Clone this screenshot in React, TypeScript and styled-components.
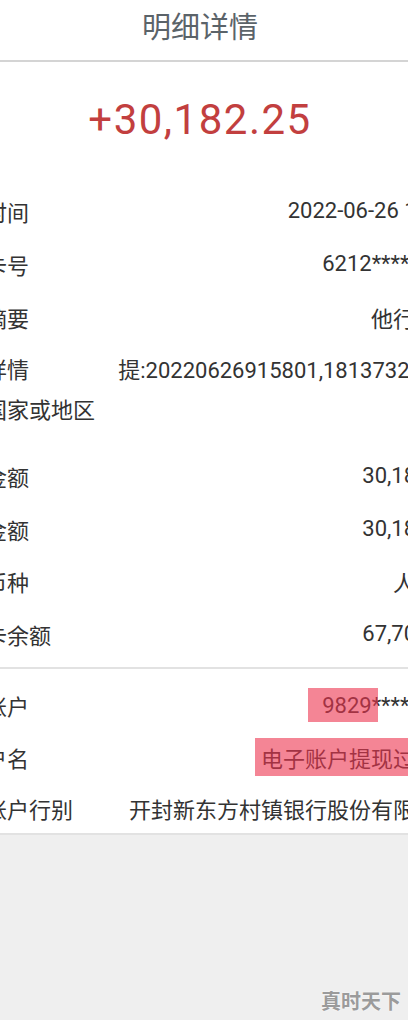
import styled, { createGlobalStyle } from 'styled-components';

const GlobalStyle = createGlobalStyle`
  html, body {
    margin: 0;
    padding: 0;
    background: #efefef;
  }
  body {
    font-family: Roboto, "Noto Sans CJK SC", sans-serif;
    color: #333333;
  }
`;

interface IRow {
  label: string;
  value: string;
  h?: number;
  pb?: number;
  mark?: { left: number; width?: number; height: number };
}

const mainRows: IRow[] = [
  { label: '交易时间', value: '2022-06-26\u00a015:32' },
  { label: '对方卡号', value: '6212****3518' },
  { label: '交易摘要', value: '他行转入' },
  { label: '交易详情', value: '提:20220626915801,18137320564', h: 50 },
  { label: '交易国家或地区', value: '中国', h: 56, pb: 26 },
  { label: '交易金额', value: '30,182.25' },
  { label: '入账金额', value: '30,182.25' },
  { label: '交易币种', value: '人民币', h: 52 },
  { label: '账户卡余额', value: '67,705.63' },
];

const payeeRows: IRow[] = [
  { label: '对方账户', value: '9829****3366', h: 52, mark: { left: -14, width: 70, height: 34 } },
  { label: '对方户名', value: '电子账户提现过渡户', h: 52, mark: { left: -6, height: 38 } },
  { label: '对方账户行别', value: '开封新东方村镇银行股份有限公司', h: 50 },
];

const DetailRow = ({ label, value, h, pb, mark }: IRow) => (
  <Row $h={h ?? 53} $pb={pb ?? 0}>
    <Label>{label}</Label>
    <Value>
      {mark && <Mark style={{ left: mark.left, width: mark.width ?? 'auto', right: mark.width ? 'auto' : -10, height: mark.height }} />}
      {value}
    </Value>
  </Row>
);

export default function App() {
  return (
    <>
      <GlobalStyle />
      <Screen>
        <Page>
          <Header>明细详情</Header>
          <AmountBlock>
            <Amount>+30,182.25</Amount>
          </AmountBlock>
          <Group $pb={7}>
            {mainRows.map((row) => (
              <DetailRow key={row.label} {...row} />
            ))}
          </Group>
          <Group $pt={10}>
            {payeeRows.map((row) => (
              <DetailRow key={row.label} {...row} />
            ))}
          </Group>
        </Page>
        <Filler>
          <Watermark>真时天下</Watermark>
        </Filler>
      </Screen>
    </>
  );
}

const Screen = styled.div`
  width: 408px;
  min-height: 1020px;
  overflow: hidden;
  display: flex;
  flex-direction: column;
  background: #efefef;
`;

const Page = styled.div`
  width: 518px;
  margin-left: -59px;
  background: #ffffff;
  flex-shrink: 0;
`;

const Header = styled.div`
  height: 62px;
  box-sizing: border-box;
  padding-bottom: 10px;
  border-bottom: 2px solid #d4d4d4;
  display: flex;
  align-items: center;
  justify-content: center;
  font-size: 29px;
  color: #5b6369;
`;

const AmountBlock = styled.div`
  height: 122px;
  box-sizing: border-box;
  padding-top: 33px;
  display: flex;
  justify-content: center;
`;

const Amount = styled.div`
  font-size: 42px;
  line-height: 50px;
  letter-spacing: 1.5px;
  color: #c23f3f;
`;

const Group = styled.div<{ $pt?: number; $pb?: number }>`
  padding-top: ${(p) => p.$pt ?? 0}px;
  padding-bottom: ${(p) => p.$pb ?? 0}px;
  border-bottom: 2px solid #e2e2e2;
`;

const Row = styled.div<{ $h: number; $pb: number }>`
  height: ${(p) => p.$h}px;
  padding-bottom: ${(p) => p.$pb}px;
  box-sizing: border-box;
  display: flex;
  align-items: center;
  justify-content: space-between;
  font-size: 22px;
  white-space: nowrap;
`;

const Label = styled.span`
  color: #333333;
`;

const Value = styled.span`
  position: relative;
  color: #333333;
  text-align: right;
`;

const Mark = styled.span`
  position: absolute;
  top: 50%;
  transform: translateY(-50%);
  background: rgba(236, 52, 78, 0.6);
`;

const Filler = styled.div`
  flex: 1;
  display: flex;
  justify-content: flex-end;
  align-items: flex-end;
  padding: 0 7px 6px 0;
`;

const Watermark = styled.div`
  font-family: "Noto Sans CJK SC", sans-serif;
  font-weight: 700;
  font-size: 20px;
  line-height: 26px;
  color: #9b9b9b;
  text-shadow: 0 0 2px #ffffff;
`;
